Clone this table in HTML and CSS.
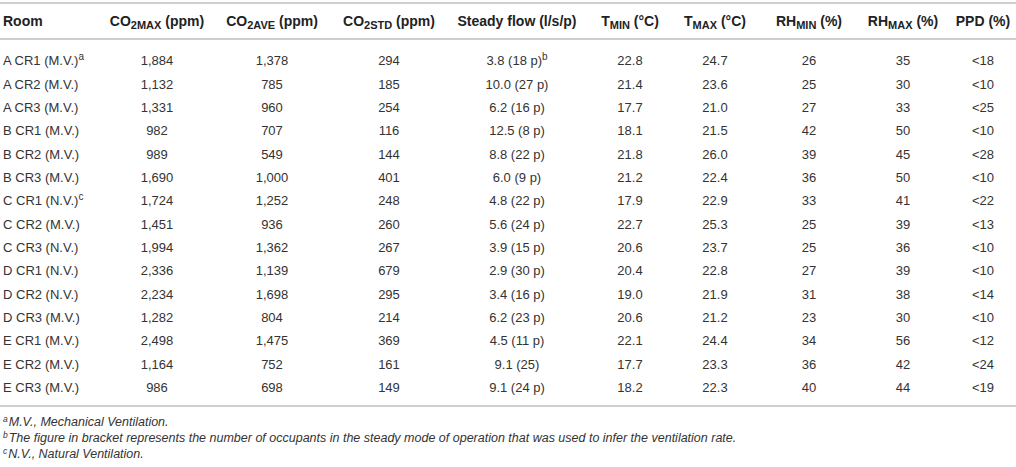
FILE: index.html
```html
<!DOCTYPE html>
<html lang="en">
<head>
<meta charset="utf-8">
<title>Table</title>
<link rel="stylesheet" href="styles.css">
</head>
<body>
<div class="page">
  <table class="data">
    <colgroup>
      <col class="c-room">
      <col class="c-co2max">
      <col class="c-co2ave">
      <col class="c-co2std">
      <col class="c-flow">
      <col class="c-tmin">
      <col class="c-tmax">
      <col class="c-rhmin">
      <col class="c-rhmax">
      <col class="c-ppd">
    </colgroup>
    <thead>
      <tr>
        <th class="room">Room</th>
        <th>CO<sub>2MAX</sub> (ppm)</th>
        <th>CO<sub>2AVE</sub> (ppm)</th>
        <th>CO<sub>2STD</sub> (ppm)</th>
        <th>Steady flow (l/s/p)</th>
        <th>T<sub>MIN</sub> (°C)</th>
        <th>T<sub>MAX</sub> (°C)</th>
        <th>RH<sub>MIN</sub> (%)</th>
        <th>RH<sub>MAX</sub> (%)</th>
        <th>PPD (%)</th>
      </tr>
    </thead>
    <tbody>
      <tr><td class="room">A CR1 (M.V.)<sup>a</sup></td><td>1,884</td><td>1,378</td><td>294</td><td>3.8 (18 p)<sup>b</sup></td><td>22.8</td><td>24.7</td><td>26</td><td>35</td><td>&lt;18</td></tr>
      <tr><td class="room">A CR2 (M.V.)</td><td>1,132</td><td>785</td><td>185</td><td>10.0 (27 p)</td><td>21.4</td><td>23.6</td><td>25</td><td>30</td><td>&lt;10</td></tr>
      <tr><td class="room">A CR3 (M.V.)</td><td>1,331</td><td>960</td><td>254</td><td>6.2 (16 p)</td><td>17.7</td><td>21.0</td><td>27</td><td>33</td><td>&lt;25</td></tr>
      <tr><td class="room">B CR1 (M.V.)</td><td>982</td><td>707</td><td>116</td><td>12.5 (8 p)</td><td>18.1</td><td>21.5</td><td>42</td><td>50</td><td>&lt;10</td></tr>
      <tr><td class="room">B CR2 (M.V.)</td><td>989</td><td>549</td><td>144</td><td>8.8 (22 p)</td><td>21.8</td><td>26.0</td><td>39</td><td>45</td><td>&lt;28</td></tr>
      <tr><td class="room">B CR3 (M.V.)</td><td>1,690</td><td>1,000</td><td>401</td><td>6.0 (9 p)</td><td>21.2</td><td>22.4</td><td>36</td><td>50</td><td>&lt;10</td></tr>
      <tr><td class="room">C CR1 (N.V.)<sup>c</sup></td><td>1,724</td><td>1,252</td><td>248</td><td>4.8 (22 p)</td><td>17.9</td><td>22.9</td><td>33</td><td>41</td><td>&lt;22</td></tr>
      <tr><td class="room">C CR2 (M.V.)</td><td>1,451</td><td>936</td><td>260</td><td>5.6 (24 p)</td><td>22.7</td><td>25.3</td><td>25</td><td>39</td><td>&lt;13</td></tr>
      <tr><td class="room">C CR3 (N.V.)</td><td>1,994</td><td>1,362</td><td>267</td><td>3.9 (15 p)</td><td>20.6</td><td>23.7</td><td>25</td><td>36</td><td>&lt;10</td></tr>
      <tr><td class="room">D CR1 (N.V.)</td><td>2,336</td><td>1,139</td><td>679</td><td>2.9 (30 p)</td><td>20.4</td><td>22.8</td><td>27</td><td>39</td><td>&lt;10</td></tr>
      <tr><td class="room">D CR2 (N.V.)</td><td>2,234</td><td>1,698</td><td>295</td><td>3.4 (16 p)</td><td>19.0</td><td>21.9</td><td>31</td><td>38</td><td>&lt;14</td></tr>
      <tr><td class="room">D CR3 (M.V.)</td><td>1,282</td><td>804</td><td>214</td><td>6.2 (23 p)</td><td>20.6</td><td>21.2</td><td>23</td><td>30</td><td>&lt;10</td></tr>
      <tr><td class="room">E CR1 (M.V.)</td><td>2,498</td><td>1,475</td><td>369</td><td>4.5 (11 p)</td><td>22.1</td><td>24.4</td><td>34</td><td>56</td><td>&lt;12</td></tr>
      <tr><td class="room">E CR2 (M.V.)</td><td>1,164</td><td>752</td><td>161</td><td>9.1 (25)</td><td>17.7</td><td>23.3</td><td>36</td><td>42</td><td>&lt;24</td></tr>
      <tr><td class="room">E CR3 (M.V.)</td><td>986</td><td>698</td><td>149</td><td>9.1 (24 p)</td><td>18.2</td><td>22.3</td><td>40</td><td>44</td><td>&lt;19</td></tr>
    </tbody>
  </table>
  <div class="notes">
    <p><sup>a</sup>M.V., Mechanical Ventilation.</p>
    <p><sup>b</sup>The figure in bracket represents the number of occupants in the steady mode of operation that was used to infer the ventilation rate.</p>
    <p><sup>c</sup>N.V., Natural Ventilation.</p>
  </div>
</div>
</body>
</html>
```

FILE: styles.css
```css
html, body {
  margin: 0;
  padding: 0;
  background: #ffffff;
}

.page {
  padding-top: 2px;
  font-family: "Liberation Sans", Arial, sans-serif;
  color: #333333;
}

.data {
  width: 1016px;
  table-layout: fixed;
  border-collapse: collapse;
  border-spacing: 0;
  font-size: 13px;
}

.c-room { width: 106px; }
.c-co2max { width: 102px; }
.c-co2ave { width: 128px; }
.c-co2std { width: 106px; }
.c-flow { width: 150px; }
.c-tmin { width: 76px; }
.c-tmax { width: 94px; }
.c-rhmin { width: 94px; }
.c-rhmax { width: 94px; }
.c-ppd { width: 66px; }

.data thead tr {
  border-top: 2px solid #cfcfcf;
  border-bottom: 2px solid #cfcfcf;
}

.data th {
  height: 34px;
  padding: 0;
  font-size: 14px;
  font-weight: bold;
  color: #222222;
  text-align: center;
  white-space: nowrap;
  vertical-align: middle;
}

.data td {
  height: 23.36px;
  padding: 0;
  text-align: center;
  white-space: nowrap;
  vertical-align: middle;
  line-height: 15px;
}

.data th.room,
.data td.room {
  text-align: left;
  padding-left: 3px;
}

.data tbody tr:first-child td {
  padding-top: 9px;
}

.data tbody tr:last-child td {
  padding-bottom: 6px;
}

.data tbody tr:last-child {
  border-bottom: 2px solid #cfcfcf;
}

.data th sub {
  font-size: 11px;
  vertical-align: -3px;
  line-height: 0;
}

.data sup {
  font-size: 10px;
  vertical-align: 5px;
  line-height: 0;
}

.notes {
  padding-top: 7px;
  padding-left: 3px;
  font-size: 12.5px;
  font-style: italic;
  color: #333333;
}

.notes p {
  margin: 0;
  line-height: 16px;
}

.notes sup {
  font-size: 8.5px;
  vertical-align: 4px;
  line-height: 0;
  margin-right: 1px;
}
```
